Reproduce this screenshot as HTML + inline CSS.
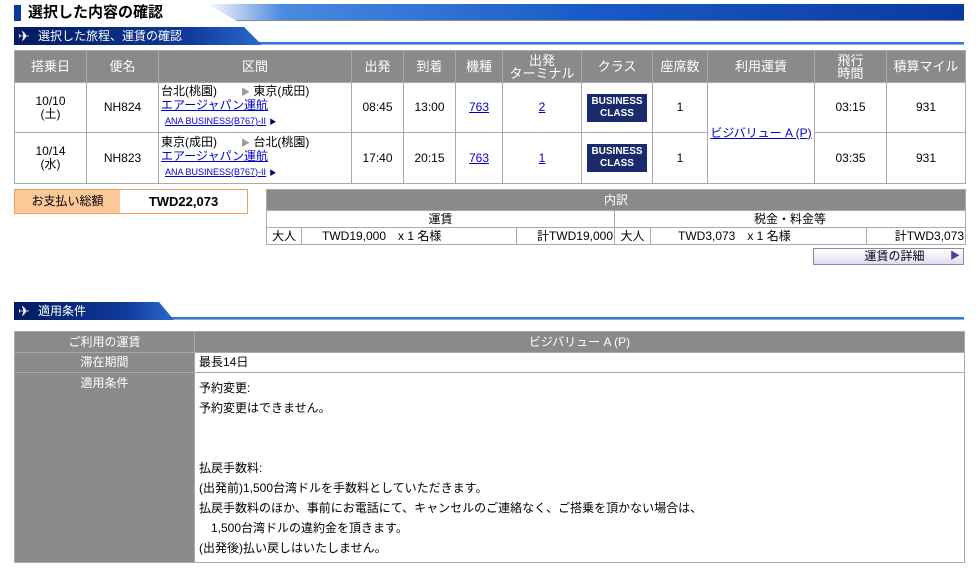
<!DOCTYPE html>
<html><head><meta charset="utf-8"><style>
*{margin:0;padding:0;box-sizing:border-box}
body{width:980px;height:573px;background:#fff;font-family:"Liberation Sans","Noto Sans CJK JP",sans-serif;font-size:12px;color:#000;position:relative;overflow:hidden}
.a{position:absolute}
table{border-collapse:collapse;position:absolute;table-layout:fixed}
td,th{border:1px solid #aaa;text-align:center;font-weight:normal;padding:0;line-height:13px;white-space:nowrap}
th{background:#8a8a8a;color:#fff;font-size:13px}
a{color:#00c;text-decoration:underline}
.bc{display:inline-block;width:60px;height:28px;background:#1a2a6c;color:#fff;font-size:10px;font-weight:bold;line-height:12px;padding-top:2px}
.sh{position:absolute;left:14px;height:18px;color:#fff;font-size:12px;line-height:18px;padding-left:24px;background:linear-gradient(90deg,#001a60,#103a9a 70%,#2a6ad0);clip-path:polygon(0 0,230px 0,248px 100%,0 100%);width:250px}
.ln{position:absolute;left:14px;width:950px;height:3px;background:#2a7ad8;border-bottom:1px solid #9ac}
</style></head><body>
<div class="a" style="left:14px;top:5px;width:7px;height:16px;background:#0a3aa0"></div>
<div class="a" style="left:28px;top:3px;font-size:15px;font-weight:bold;line-height:20px">選択した内容の確認</div>
<div class="a" style="left:207px;top:4px;width:757px;height:17px;background:linear-gradient(90deg,#fff 0,#c8d8f0 3%,#4a8ae0 10%,#1a5ac8 50%,#0a3aa0);border-bottom:1px solid #888;clip-path:polygon(0 0,100% 0,100% 100%,30px 100%)"></div>
<div class="ln" style="top:42px"></div>
<div class="sh" style="top:27px">選択した旅程、運賃の確認</div>
<div class="a" style="left:18px;top:28px;color:#fff;font-size:14px">✈</div>

<table style="left:14px;top:50px;width:951px">
<colgroup><col style="width:72px"><col style="width:72px"><col style="width:193px"><col style="width:52px"><col style="width:52px"><col style="width:47px"><col style="width:79px"><col style="width:71px"><col style="width:55px"><col style="width:107px"><col style="width:72px"><col style="width:79px"></colgroup>
<tr style="height:32px"><th>搭乗日</th><th>便名</th><th>区間</th><th>出発</th><th>到着</th><th>機種</th><th>出発<br>ターミナル</th><th>クラス</th><th>座席数</th><th>利用運賃</th><th>飛行<br>時間</th><th>積算マイル</th></tr>
<tr style="height:50px"><td>10/10<br>(土)</td><td>NH824</td><td style="text-align:left;padding-left:2px">台北(桃園)　　<span style="color:#999;font-size:9px">▶</span> 東京(成田)<br><a>エアージャパン運航</a><br><a style="font-size:9px;margin-left:4px;line-height:18px">ANA BUSINESS(B767)-II</a> <span style="font-size:7px;color:#006">▶</span></td><td>08:45</td><td>13:00</td><td><a>763</a></td><td><a>2</a></td><td><span class="bc">BUSINESS<br>CLASS</span></td><td>1</td><td rowspan="2"><a>ビジバリュー A (P)</a></td><td>03:15</td><td>931</td></tr>
<tr style="height:51px"><td>10/14<br>(水)</td><td>NH823</td><td style="text-align:left;padding-left:2px">東京(成田)　　<span style="color:#999;font-size:9px">▶</span> 台北(桃園)<br><a>エアージャパン運航</a><br><a style="font-size:9px;margin-left:4px;line-height:18px">ANA BUSINESS(B767)-II</a> <span style="font-size:7px;color:#006">▶</span></td><td>17:40</td><td>20:15</td><td><a>763</a></td><td><a>1</a></td><td><span class="bc">BUSINESS<br>CLASS</span></td><td>1</td><td>03:35</td><td>931</td></tr>
</table>

<div class="a" style="left:14px;top:189px;width:234px;height:25px;border:1px solid #f0a060;display:flex">
<div style="width:105px;background:#fbc898;text-align:center;line-height:23px">お支払い総額</div>
<div style="flex:1;text-align:center;line-height:23px;font-weight:bold;font-size:13px">TWD22,073</div></div>

<table style="left:266px;top:189px;width:699px">
<colgroup><col style="width:35px"><col style="width:215px"><col style="width:98px"><col style="width:36px"><col style="width:216px"><col style="width:99px"></colgroup>
<tr style="height:21px"><th colspan="6" style="font-size:12px">内訳</th></tr>
<tr style="height:17px"><td colspan="3">運賃</td><td colspan="3">税金・料金等</td></tr>
<tr style="height:17px"><td>大人</td><td style="text-align:left;padding-left:20px">TWD19,000　x 1 名様</td><td style="text-align:right;padding-right:1px">計TWD19,000</td><td>大人</td><td style="text-align:left;padding-left:27px">TWD3,073　x 1 名様</td><td style="text-align:right;padding-right:1px">計TWD3,073</td></tr>
</table>
<div class="a" style="left:813px;top:248px;width:151px;height:17px;border:1px solid #88a;background:linear-gradient(#fff,#dde);text-align:center;line-height:15px;color:#002">　運賃の詳細<span style="position:absolute;right:3px;color:#449;font-size:10px">▶</span></div>

<div class="ln" style="top:317px"></div>
<div class="sh" style="top:302px;width:160px;clip-path:polygon(0 0,145px 0,160px 100%,0 100%)">適用条件</div>
<div class="a" style="left:18px;top:303px;color:#fff;font-size:14px">✈</div>

<table style="left:14px;top:331px;width:951px">
<colgroup><col style="width:180px"><col></colgroup>
<tr style="height:21px"><th style="font-size:12px">ご利用の運賃</th><th style="font-size:12px">ビジバリュー A (P)</th></tr>
<tr style="height:20px"><td style="background:#8a8a8a;color:#fff">滞在期間</td><td style="text-align:left;padding-left:4px">最長14日</td></tr>
<tr style="height:190px"><td style="background:#8a8a8a;color:#fff;vertical-align:top;padding-top:4px">適用条件</td><td style="text-align:left;padding-left:4px;vertical-align:top;padding-top:5px;line-height:20px">予約変更:<br>予約変更はできません。<br><br><br>払戻手数料:<br>(出発前)1,500台湾ドルを手数料としていただきます。<br>払戻手数料のほか、事前にお電話にて、キャンセルのご連絡なく、ご搭乗を頂かない場合は、<br>　1,500台湾ドルの違約金を頂きます。<br>(出発後)払い戻しはいたしません。</td></tr>
</table>
</body></html>
